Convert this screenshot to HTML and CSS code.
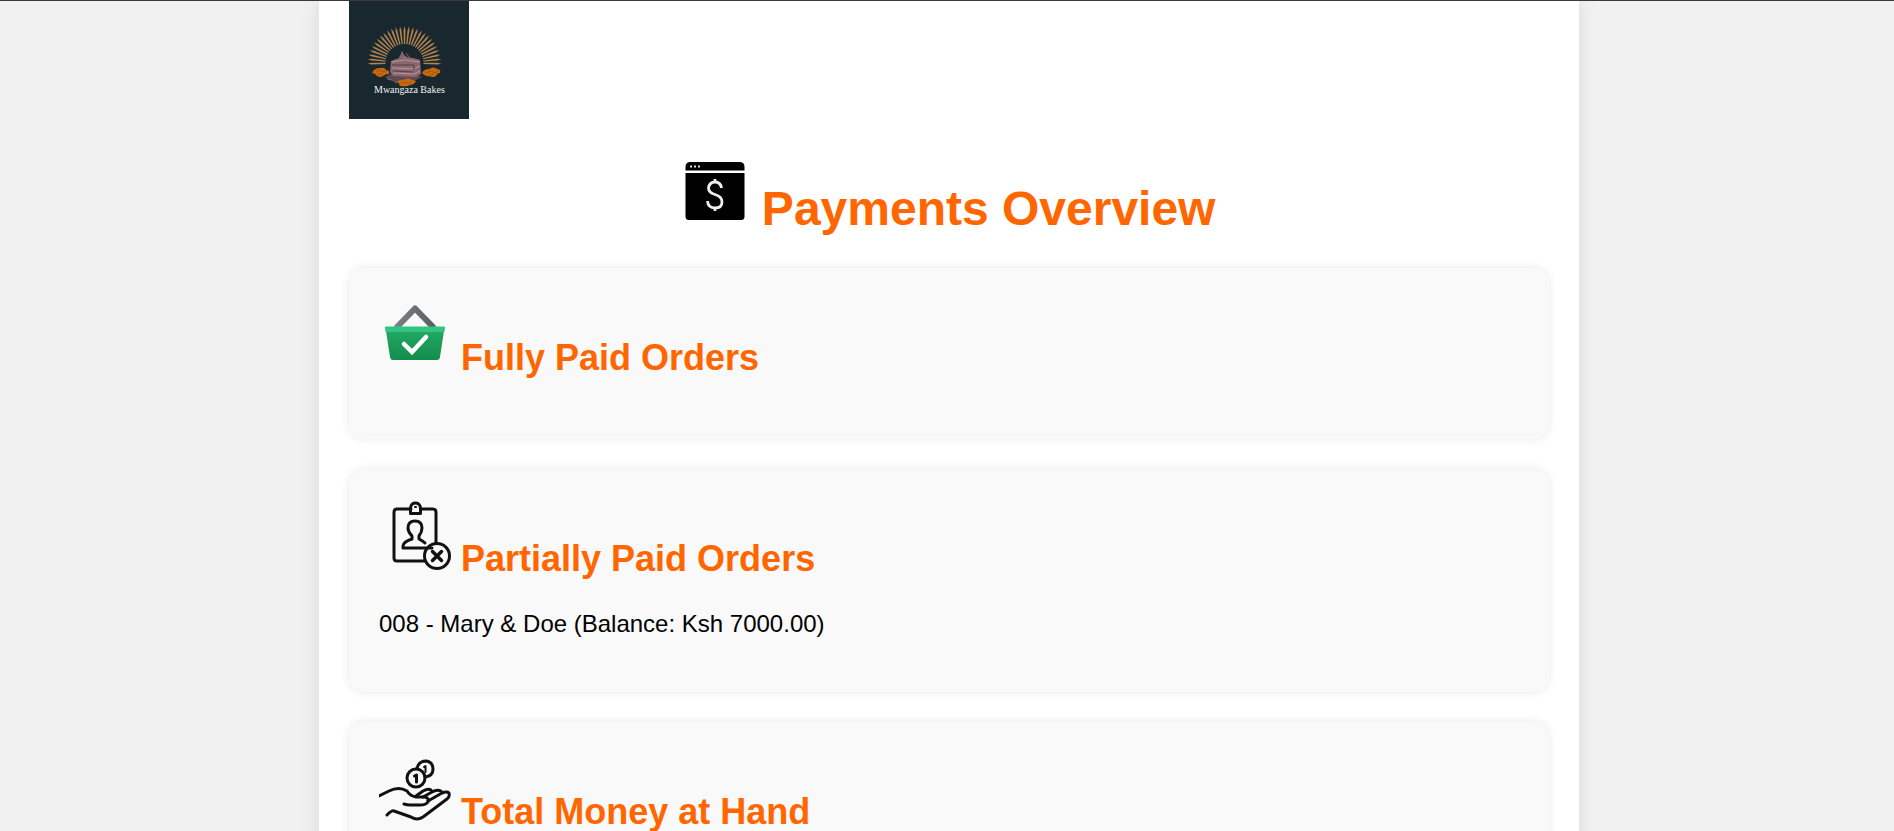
FILE: index.html
```html
<!DOCTYPE html>
<html lang="en">
<head>
<meta charset="utf-8">
<meta name="viewport" content="width=device-width, initial-scale=1">
<title>Payments Overview</title>
<link rel="stylesheet" href="styles.css">
</head>
<body>
<main class="container">
  <svg class="logo" viewBox="0 1 120 118" role="img" aria-label="Mwangaza Bakes">
    <defs><path id="ray" d="M0-37L.9-33 .6-19H-.6L-.9-33z"/></defs>
    <rect width="120" height="120" fill="#18282e"/>
    <g transform="translate(55.500 63)" fill="#b58350">
      <use href="#ray" transform="rotate(-91)"/><use href="#ray" transform="rotate(-84)"/><use href="#ray" transform="rotate(-77)"/>
      <use href="#ray" transform="rotate(-70)"/><use href="#ray" transform="rotate(-63)"/><use href="#ray" transform="rotate(-56)"/>
      <use href="#ray" transform="rotate(-49)"/><use href="#ray" transform="rotate(-42)"/><use href="#ray" transform="rotate(-35)"/>
      <use href="#ray" transform="rotate(-28)"/><use href="#ray" transform="rotate(-21)"/><use href="#ray" transform="rotate(-14)"/>
      <use href="#ray" transform="rotate(-7)"/><use href="#ray"/><use href="#ray" transform="rotate(7)"/>
      <use href="#ray" transform="rotate(14)"/><use href="#ray" transform="rotate(21)"/><use href="#ray" transform="rotate(28)"/>
      <use href="#ray" transform="rotate(35)"/><use href="#ray" transform="rotate(42)"/><use href="#ray" transform="rotate(49)"/>
      <use href="#ray" transform="rotate(56)"/><use href="#ray" transform="rotate(63)"/><use href="#ray" transform="rotate(70)"/>
      <use href="#ray" transform="rotate(77)"/><use href="#ray" transform="rotate(84)"/><use href="#ray" transform="rotate(91)"/>
    </g>
    <path d="M36 77l6-3 26 1 5 2-8 4-20 1z" fill="#5d4a52"/>
    <path d="M42 61l8-3 1-2 2-5 2 4 3 2 6 1 7 2 1 14-5 3-23-1-3-4z" fill="#8a6870"/>
    <path d="M43 62l12-2 16 2M43 68l22 1 6-3M44 73l21 1 6-3" fill="none" stroke="#c0949a"/>
    <path d="M65 65v5M43 65h22M44 71l20 1" fill="none" stroke="#513f48"/>
    <path d="M50 57l4 1M53 52v5M57 53l3 4M38 79l5 1M46 83l3-1" stroke="#806872"/>
    <g fill="#c9670f">
      <path d="M23 73q2-5 8-5 5-1 6 2 4 0 3 4-4 0-6 2-3 2-6 0-2-3-5-3z"/>
      <path d="M73 73q2-4 7-4 5-3 8 0 4 0 3 4-3 0-4 3-3 2-7 0-4 1-7-3z"/>
      <path d="M48 82q3-3 6-2 6-3 9 0l4 1q-2 4-6 4-3 2-7 1-4 1-4-3z"/>
    </g>
    <path d="M27 72q4-3 6-1t5-1M29 75l5-2M77 73q4-3 7-1t5-1M80 76l5-2M52 84q4-3 6-1t5-1" fill="none" stroke="#8b480e" stroke-width=".6"/>
    <text class="logo-name" x="25" y="93">Mwangaza Bakes</text>
  </svg>

  <h1 class="title"><svg class="icon" viewBox="0 0 72 72" aria-hidden="true">
    <path d="M6.500 17.500V14q0-5 5-5h49q5 0 5 5v3.500zM6.500 20h59v43.500q0 3.500-3.500 3.500h-52Q6.500 67 6.500 63.500z"/>
    <path d="M11 13.500h2M15 13.500h2M19 13.500h2" stroke="#ddd" stroke-width="2"/>
    <path d="M42.500 35q-1-6-6.500-6t-6.500 6q0 4.500 6.500 6.500 7 2 7 7.500 0 6-7 6t-7.500-7M36 26v3.500M36 54v4" fill="none" stroke="#eee" stroke-width="2.800"/>
  </svg> Payments Overview</h1>

  <section class="card">
    <h2 class="card-title"><svg class="icon" viewBox="0 0 72 72" aria-hidden="true">
      <defs>
        <linearGradient id="basket" x2="0" y2="1"><stop stop-color="#21a864"/><stop offset="1" stop-color="#148c4c"/></linearGradient>
        <linearGradient id="handle"><stop stop-color="#7b8085"/><stop offset="1" stop-color="#595e62"/></linearGradient>
      </defs>
      <path d="M17 30L36 10.500 55 30" fill="none" stroke="url(#handle)" stroke-width="6" stroke-linejoin="round"/>
      <path d="M7 33h58l-4 26q-.5 3-3 3H14q-2.500 0-3-3z" fill="url(#basket)"/>
      <path d="M7 28.500h58q1 0 1 1L65.500 34h-59L6 29.500q0-1 1-1z" fill="#33c481"/>
      <path d="M25 46l8 8 14-15" fill="none" stroke="#fff" stroke-width="4.500" stroke-linecap="round"/>
    </svg> Fully Paid Orders</h2>
  </section>

  <section class="card">
    <h2 class="card-title"><svg class="icon line-icon" viewBox="0 0 72 72" aria-hidden="true">
      <path d="M32 10H18q-3 0-3 3v46q0 3 3 3h28M42 10h12q3 0 3 3v31"/>
      <path d="M31.500 14.500V8.500q1-4.500 5-4.500t5 4.500v6z"/><path d="M36 8h1" stroke-width="2"/>
      <path d="M53 49H24v-2q0-4 9-7v-3q-4-4-4-8 0-7 7-7t7 7q0 4-3 8v3q4 2 6 4"/>
      <circle cx="58" cy="57" r="12.500"/><path d="M53.500 52.500l9 9M62.500 52.500l-9 9" stroke-width="3.500"/>
    </svg> Partially Paid Orders</h2>
    <p class="order">008 - Mary &amp; Doe (Balance: Ksh 7000.00)</p>
  </section>

  <section class="card">
    <h2 class="card-title"><svg class="icon line-icon" viewBox="0 0 72 72" aria-hidden="true">
      <circle cx="37" cy="26" r="9"/><path d="M38 16q2-7 9-7 7 1 7 8 0 7-8 8"/>
      <path d="M35.500 24l2-1v7" /><path d="M45 15l1.500-1v6" stroke-width="2"/>
      <path d="M0 44l10-5q10-5 18 0 3 5 9 6h8q5 0 4 5-2 3-8 3H31q-3 0-6-1"/>
      <path d="M37 44l7-5q5-3 8-1M44 45l9-5q5-3 9-1M49 49l14-8q5-2 7 0 1 4-2 6L44 65q-6 4-12 0l-17-6q-2-1-7 4"/>
    </svg> Total Money at Hand</h2>
  </section>
</main>
</body>
</html>
```

FILE: styles.css
```css
body {
  margin: 0;
  padding-left: 4px;
  height: 100vh;
  box-sizing: border-box;
  overflow: hidden;
  border-top: 1px solid #3a3a3c;
  background: #f1f1f1;
  color: #000;
  font-family: "Liberation Sans", Arial, sans-serif;
  font-size: 24px;
}

.container {
  max-width: 1200px;
  margin: 0 auto;
  padding: 0 30px 30px;
  background: #fff;
  box-shadow: 0 0 18px rgba(0, 0, 0, 0.1);
}

.logo {
  display: block;
  width: 120px;
  height: 118px;
}

.logo-name {
  font-family: "Liberation Serif", "Times New Roman", serif;
  font-size: 10px;
  fill: #f1f1f1;
}

.icon {
  width: 72px;
  height: 72px;
}

.line-icon {
  fill: none;
  stroke: #111;
  stroke-width: 3;
  stroke-linecap: round;
  stroke-linejoin: round;
}

.title {
  margin: 34px 0 32px;
  padding-right: 4px;
  color: #ff6600;
  font-size: 48px;
  text-align: center;
}

.title .icon {
  margin-right: -2px;
}

.card {
  margin-bottom: 30px;
  padding: 30px;
  border-radius: 15px;
  background: #f9f9f9;
  box-shadow: 0 0 10px rgba(0, 0, 0, 0.09);
}

.card-title {
  margin: 0 0 30px;
  color: #ff6600;
  font-size: 36px;
}

.order {
  margin: 24px 0;
}
```
